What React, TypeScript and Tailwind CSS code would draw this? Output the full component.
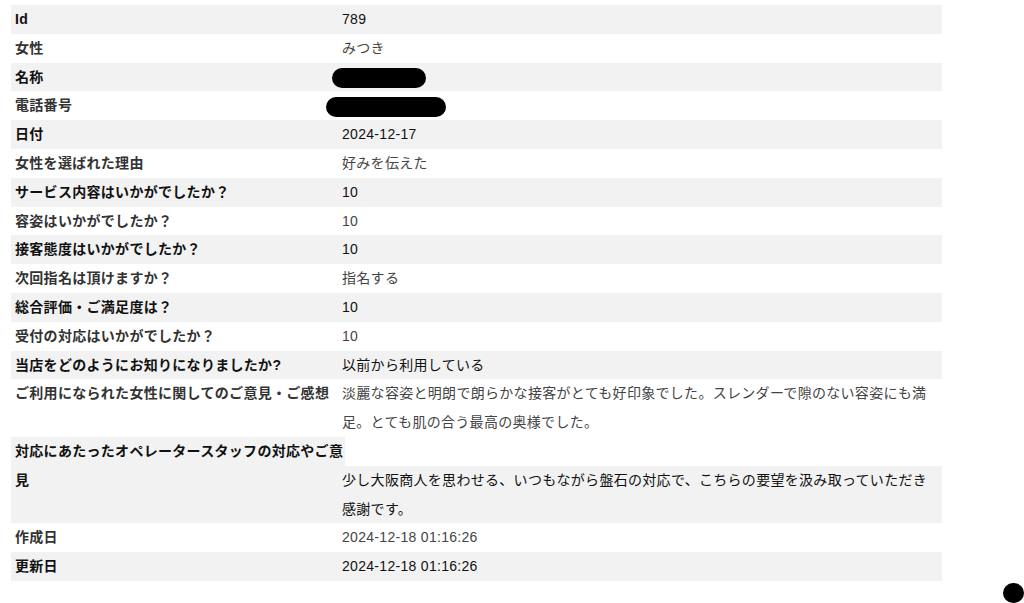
import React from 'react';

type Row = { label: string; value?: React.ReactNode; lines?: string[] };

// redaction bars drawn over the masked values
function Redacted({ w, shift }: { w: number; shift: number }) {
  return (
    <span
      className="inline-block h-[20px] rounded-full bg-black align-middle"
      style={{ width: w, marginLeft: shift }}
    />
  );
}

const rows: Row[] = [
  { label: 'Id', value: '789' },
  { label: '女性', value: 'みつき' },
  { label: '名称', value: <Redacted w={94} shift={-10} /> },
  { label: '電話番号', value: <Redacted w={120} shift={-16} /> },
  { label: '日付', value: '2024-12-17' },
  { label: '女性を選ばれた理由', value: '好みを伝えた' },
  { label: 'サービス内容はいかがでしたか？', value: '10' },
  { label: '容姿はいかがでしたか？', value: '10' },
  { label: '接客態度はいかがでしたか？', value: '10' },
  { label: '次回指名は頂けますか？', value: '指名する' },
  { label: '総合評価・ご満足度は？', value: '10' },
  { label: '受付の対応はいかがでしたか？', value: '10' },
  { label: '当店をどのようにお知りになりましたか?', value: '以前から利用している' },
  {
    label: 'ご利用になられた女性に関してのご意見・ご感想',
    lines: [
      '淡麗な容姿と明朗で朗らかな接客がとても好印象でした。スレンダーで隙のない容姿にも満',
      '足。とても肌の合う最高の奥様でした。',
    ],
  },
];

const tail: Row[] = [
  { label: '作成日', value: '2024-12-18 01:16:26' },
  { label: '更新日', value: '2024-12-18 01:16:26' },
];

function DataRow({ row, shaded }: { row: Row; shaded: boolean }) {
  return (
    <div
      className={
        'grid grid-cols-[331px_1fr] ' +
        (shaded ? 'bg-[#f2f2f2] text-[#111]' : 'bg-white text-[#333]')
      }
    >
      <div className={'whitespace-nowrap pl-1 ' + (shaded ? 'font-bold' : 'font-semibold')}>
        {row.label}
      </div>
      <div className={shaded ? 'text-[#111]' : 'text-[#444]'}>
        {row.lines
          ? row.lines.map((l, i) => (
              <div key={i} className="whitespace-nowrap">
                {l}
              </div>
            ))
          : row.value}
      </div>
    </div>
  );
}

export default function App() {
  return (
    <div className="min-h-[603px] bg-white pt-[5px] pl-[11px] font-['Liberation_Sans','Noto_Sans_CJK_JP',sans-serif] text-[14px] leading-[28.8px] tracking-[0.3px]">
      <div className="w-[931px]">
        {rows.map((r, i) => (
          <DataRow key={r.label} row={r} shaded={i % 2 === 0} />
        ))}

        {/* label wraps, answer starts one line lower */}
        <div className="grid grid-cols-[330px_1fr] text-[#111]">
          <div className="row-span-2 w-[334px] whitespace-nowrap bg-[#f2f2f2] pl-1 font-bold">
            対応にあたったオペレータースタッフの対応やご意
            <br />見
          </div>
          <div className="h-[28.8px]" />
          <div className="row-span-2 -ml-px bg-[#f2f2f2] pl-[2px]">
            <div className="whitespace-nowrap">
              少し大阪商人を思わせる、いつもながら盤石の対応で、こちらの要望を汲み取っていただき
            </div>
            <div className="whitespace-nowrap">感謝です。</div>
          </div>
          <div />
        </div>

        {tail.map((r, i) => (
          <DataRow key={r.label} row={r} shaded={i % 2 === 1} />
        ))}
      </div>

      <div className="fixed bottom-0 right-0 h-[20px] w-[21px] rounded-full bg-black" />
    </div>
  );
}
